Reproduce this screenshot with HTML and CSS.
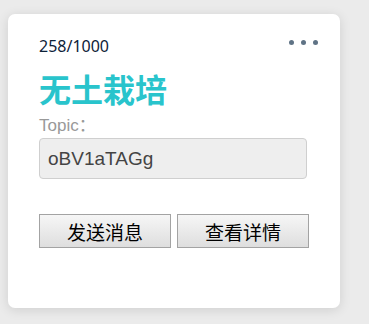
FILE: index.html
```html
<!DOCTYPE html>
<html>
<head>
<meta charset="utf-8">
<link rel="stylesheet" href="styles.css">
</head>
<body>
<div class="card">
  <div class="head">
    <span class="count">258/1000</span>
    <span class="more"><i></i><i></i><i></i></span>
  </div>
  <div class="title">无土栽培</div>
  <div class="label">Topic：</div>
  <div class="field">oBV1aTAGg</div>
  <div class="actions">
    <button class="btn">发送消息</button>
    <button class="btn">查看详情</button>
  </div>
</div>
</body>
</html>
```
FILE: styles.css
```css
html, body { margin: 0; padding: 0; }
body {
  background: #ebebeb;
  width: 369px;
  height: 324px;
  overflow: hidden;
  padding: 14px 0 0 8px;
  box-sizing: border-box;
  font-family: "Liberation Sans", "Noto Sans CJK SC", sans-serif;
}
.card {
  width: 332px;
  height: 294px;
  box-sizing: border-box;
  background: #fff;
  border-radius: 7px;
  box-shadow: 0 2px 12px rgba(0,0,0,0.12);
  padding: 24px 0 0 31px;
}
.head {
  display: flex;
  align-items: center;
  justify-content: space-between;
  width: 279px;
  height: 16px;
}
.count {
  font-family: "Noto Sans", "Liberation Sans", sans-serif;
  font-size: 16px;
  color: #0d2238;
}
.more { display: flex; gap: 7px; margin-top: -8px; }
.more i {
  display: block;
  width: 5px; height: 5px;
  border-radius: 50%;
  background: #5f7385;
}
.title {
  margin-top: 16px;
  font-family: "Noto Sans CJK SC", sans-serif;
  font-weight: 700;
  font-size: 32px;
  line-height: 36px;
  color: #29c4cc;
}
.label {
  margin-top: 10px;
  font-size: 17px;
  line-height: 20px;
  color: #999;
}
.field {
  margin-top: 2px;
  width: 268px;
  height: 41px;
  box-sizing: border-box;
  background: #eeeeee;
  border: 1px solid #cfcfcf;
  border-radius: 4px;
  padding-left: 8px;
  font-size: 19px;
  line-height: 39px;
  color: #444;
}
.actions {
  display: flex;
  gap: 6px;
  margin-top: 35px;
}
.btn {
  width: 132px;
  height: 34px;
  margin: 0;
  border: 1px solid #a3a3a3;
  border-radius: 0;
  background: linear-gradient(#f6f6f6, #dedede);
  font-family: "Noto Sans CJK SC", sans-serif;
  font-size: 19px;
  color: #000;
  padding: 0;
}
```
